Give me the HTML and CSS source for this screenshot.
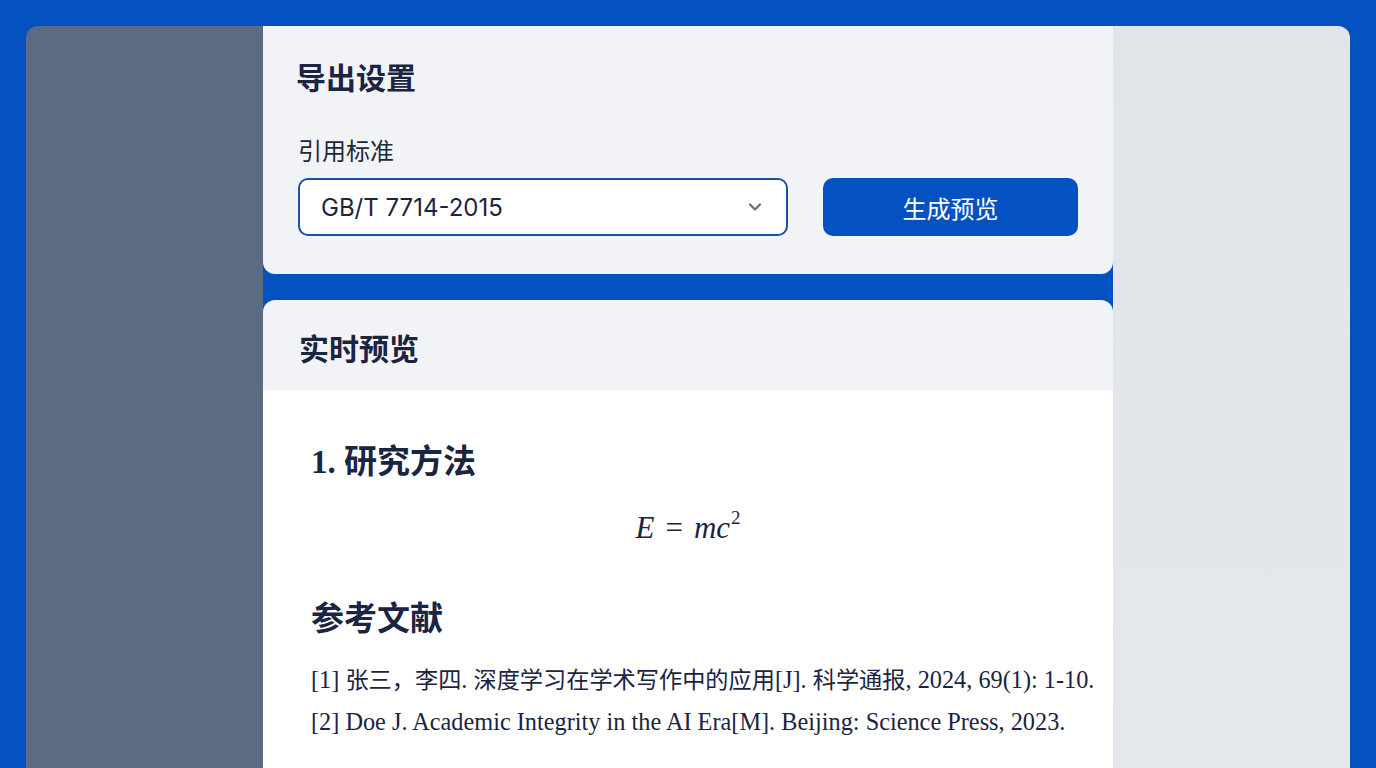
FILE: index.html
```html
<!DOCTYPE html>
<html lang="zh-CN">
<head>
<meta charset="utf-8">
<title>导出设置</title>
<link rel="stylesheet" href="styles.css">
</head>
<body>
<div class="frame">
  <aside class="side side-left"></aside>
  <main class="center">
    <section class="card settings">
      <h2 class="card-title">导出设置</h2>
      <div class="field-label">引用标准</div>
      <div class="field-row">
        <div class="select">
          <span class="select-value">GB/T 7714-2015</span>
          <svg class="chevron" width="18" height="18" viewBox="0 0 18 18" aria-hidden="true">
            <path d="M4 6.5 L9 11.5 L14 6.5" fill="none" stroke="#6b7280" stroke-width="2.4" stroke-linecap="round" stroke-linejoin="round"/>
          </svg>
        </div>
        <button class="btn-primary">生成预览</button>
      </div>
    </section>
    <section class="card preview">
      <header class="preview-head">
        <h2 class="card-title">实时预览</h2>
      </header>
      <div class="preview-body">
        <h3 class="doc-h">1. 研究方法</h3>
        <div class="formula"><i>E</i><span class="eq">=</span><i>mc</i><sup>2</sup></div>
        <h3 class="doc-h refs-h">参考文献</h3>
        <p class="ref">[1] <span class="cjk">张三，李四</span>. <span class="cjk">深度学习在学术写作中的应用</span>[J]. <span class="cjk">科学通报</span>, 2024, 69(1): 1-10.</p>
        <p class="ref">[2] Doe J. Academic Integrity in the AI Era[M]. Beijing: Science Press, 2023.</p>
      </div>
    </section>
  </main>
  <aside class="side side-right"></aside>
</div>
</body>
</html>
```

FILE: styles.css
```css
* { box-sizing: border-box; }

html, body {
  margin: 0;
  height: 100%;
}

body {
  background: #0452c2;
  font-family: "Noto Sans CJK SC", "Noto Sans", sans-serif;
  color: #1b2440;
  overflow: hidden;
}

.frame {
  display: grid;
  grid-template-columns: 237px 850px 237px;
  height: 100vh;
  padding: 26px 26px 0 26px;
}

.side-left {
  background: #5b6b84;
  border-top-left-radius: 12px;
}

.side-right {
  background: linear-gradient(180deg, #e1e4e9 0%, #e4e7ec 100%);
  border-top-right-radius: 12px;
}

.center {
  display: flex;
  flex-direction: column;
  gap: 26px;
  min-height: 0;
}

.card {
  background: #f1f3f6;
}

.settings {
  height: 248px;
  border-radius: 0 0 12px 12px;
  padding: 30px 35px 0 33px;
}

.card-title {
  margin: 0;
  font-size: 30px;
  line-height: 40px;
  font-weight: 700;
  color: #1b2440;
}

.field-label {
  margin-top: 38px;
  font-size: 24px;
  line-height: 32px;
  color: #1f2937;
  padding-left: 2px;
}

.field-row {
  margin-top: 12px;
  display: grid;
  grid-template-columns: 1fr 255px;
  gap: 35px;
  padding-left: 2px;
}

.select {
  height: 58px;
  background: #ffffff;
  border: 2px solid #1c4fa6;
  border-radius: 10px;
  display: flex;
  align-items: center;
  justify-content: space-between;
  padding: 0 22px 0 21px;
}

.select-value {
  font-family: Inter, "Noto Sans", sans-serif;
  font-size: 24px;
  color: #1b2440;
}

.chevron { display: block; }

.btn-primary {
  height: 58px;
  border: none;
  border-radius: 10px;
  background: #0452c2;
  color: #ffffff;
  font-family: "Noto Sans CJK SC", sans-serif;
  font-size: 24px;
  font-weight: 400;
  cursor: pointer;
}

.preview {
  flex: 1;
  border-radius: 12px 12px 0 0;
  display: flex;
  flex-direction: column;
  overflow: hidden;
}

.preview-head {
  height: 90px;
  padding: 27px 36px 0 36px;
}

.preview-body {
  flex: 1;
  background: #ffffff;
  padding: 50px 48px 0 48px;
}

.doc-h {
  margin: 0;
  font-family: "Liberation Serif", "Noto Sans CJK SC", serif;
  font-size: 33px;
  line-height: 44px;
  font-weight: 700;
  color: #1b2440;
}

.formula {
  margin-top: 24px;
  text-align: center;
  font-family: "Liberation Serif", serif;
  font-size: 31px;
  line-height: 40px;
  color: #1b2440;
}

.formula i { font-style: italic; }

.formula .eq { padding: 0 11px; }

.formula sup {
  font-size: 19px;
  vertical-align: 14px;
  line-height: 0;
  margin-left: 1px;
}

.refs-h { margin-top: 49px; }

.ref {
  margin: 0;
  font-family: "Liberation Serif", "Noto Sans CJK SC", serif;
  font-size: 24.3px;
  line-height: 42px;
  color: #1b2440;
  white-space: nowrap;
}

.ref .cjk {
  font-family: "Noto Sans CJK SC", sans-serif;
  font-size: 23.2px;
}

.refs-h + .ref { margin-top: 16px; }
```
